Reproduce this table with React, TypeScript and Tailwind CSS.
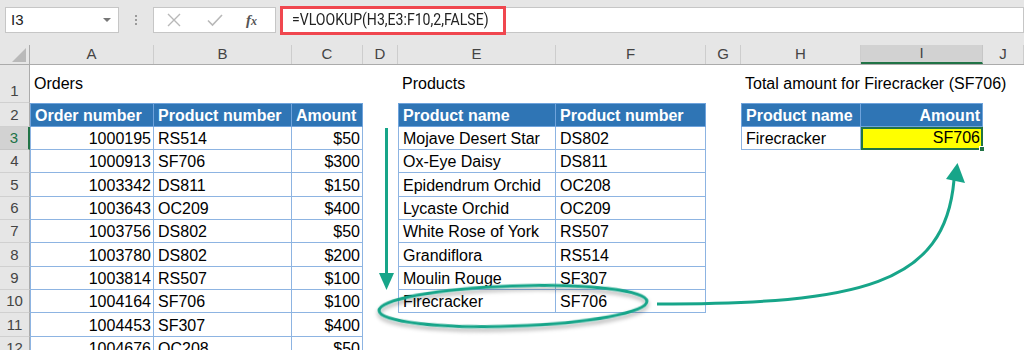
import React from "react";

const colW = [
  "w-[124px]",
  "w-[138px]",
  "w-[71px]",
  "w-[35px]",
  "w-[158px]",
  "w-[150px]",
  "w-[35px]",
  "w-[120px]",
  "w-[122px]",
  "w-[41px]",
];
const colLetters = ["A", "B", "C", "D", "E", "F", "G", "H", "I", "J"];
const rowH = [
  "h-[38px]",
  "h-[24px]",
  "h-[23px]",
  "h-[23px]",
  "h-[24px]",
  "h-[23px]",
  "h-[23px]",
  "h-[24px]",
  "h-[23px]",
  "h-[23px]",
  "h-[24px]",
  "h-[23px]",
];

const orders: [string, string, string][] = [
  ["1000195", "RS514", "$50"],
  ["1000913", "SF706", "$300"],
  ["1003342", "DS811", "$150"],
  ["1003643", "OC209", "$400"],
  ["1003756", "DS802", "$50"],
  ["1003780", "DS802", "$200"],
  ["1003814", "RS507", "$100"],
  ["1004164", "SF706", "$100"],
  ["1004453", "SF307", "$400"],
  ["1004676", "OC208", "$50"],
];
const products: [string, string][] = [
  ["Mojave Desert Star", "DS802"],
  ["Ox-Eye Daisy", "DS811"],
  ["Epidendrum Orchid", "OC208"],
  ["Lycaste Orchid", "OC209"],
  ["White Rose of York", "RS507"],
  ["Grandiflora", "RS514"],
  ["Moulin Rouge", "SF307"],
  ["Firecracker", "SF706"],
];

const HEAD =
  "bg-[#2f75b5] text-white font-bold border-r border-b border-[#6fa3dc]";
const BODY = "border-r border-b border-[#8db4e2]";
const L = "justify-start pl-[4px]";
const R = "justify-end pr-[2px]";

type Spec = { t?: React.ReactNode; cls: string };

function spec(r: number, c: number): Spec {
  if (r === 1) {
    if (c === 0) return { t: "Orders", cls: L };
    if (c === 4) return { t: "Products", cls: L };
    if (c === 7)
      return { t: "Total amount for Firecracker (SF706)", cls: L };
    return { cls: "" };
  }
  if (r === 2) {
    if (c === 0) return { t: "Order number", cls: `${HEAD} border-t border-l ${L}` };
    if (c === 1) return { t: "Product number", cls: `${HEAD} border-t ${L}` };
    if (c === 2) return { t: "Amount", cls: `${HEAD} border-t ${L}` };
    if (c === 4) return { t: "Product name", cls: `${HEAD} border-t border-l ${L}` };
    if (c === 5) return { t: "Product number", cls: `${HEAD} border-t ${L}` };
    if (c === 7) return { t: "Product name", cls: `${HEAD} border-t border-l ${L}` };
    if (c === 8) return { t: "Amount", cls: `${HEAD} border-t ${R}` };
    return { cls: "" };
  }
  const o = orders[r - 3];
  if (o) {
    if (c === 0) return { t: o[0], cls: `${BODY} border-l ${R}` };
    if (c === 1) return { t: o[1], cls: `${BODY} ${L}` };
    if (c === 2) return { t: o[2], cls: `${BODY} ${R}` };
  }
  const p = products[r - 3];
  if (p) {
    if (c === 4) return { t: p[0], cls: `${BODY} border-l ${L}` };
    if (c === 5) return { t: p[1], cls: `${BODY} ${L}` };
  }
  if (r === 3) {
    if (c === 7) return { t: "Firecracker", cls: `${BODY} border-l ${L}` };
    if (c === 8)
      return {
        t: (
          <>
            SF706
            <span className="absolute right-[-4px] bottom-[-4px] w-[6px] h-[6px] bg-[#217346] border border-white" />
          </>
        ),
        cls: "relative bg-[#ffff00] border-2 border-[#217346] justify-end pr-[1px]",
      };
  }
  return { cls: "" };
}

function FormulaBar() {
  return (
    <div className="h-[45px] bg-[#e6e6e6] flex items-start pt-[7px]">
      <div className="ml-[5px] w-[114px] h-[26px] bg-white border border-[#c6c6c6] flex items-center justify-between pl-[5px] pr-[7px] text-[15px] text-[#222]">
        <span>I3</span>
        <svg width="8" height="5" viewBox="0 0 8 5">
          <path d="M0 0 L8 0 L4 4 Z" fill="#777" />
        </svg>
      </div>
      <div className="w-[34px] h-[26px] flex flex-col items-center justify-center gap-[2px]">
        <span className="w-[2px] h-[2px] bg-[#9a9a9a]" />
        <span className="w-[2px] h-[2px] bg-[#9a9a9a]" />
        <span className="w-[2px] h-[2px] bg-[#9a9a9a]" />
      </div>
      <div className="w-[123px] h-[26px] bg-white border border-[#c6c6c6] flex items-center">
        <svg className="ml-[13px]" width="14" height="14" viewBox="0 0 14 14">
          <path d="M1 1 L13 13 M13 1 L1 13" stroke="#b8b8b8" strokeWidth="1.4" />
        </svg>
        <svg className="ml-[26px]" width="16" height="14" viewBox="0 0 16 14">
          <path d="M1 7.5 L5.5 12 L15 2" stroke="#b8b8b8" strokeWidth="1.6" fill="none" />
        </svg>
        <span className="ml-[23px] font-['Liberation_Serif',serif] italic font-bold text-[15px] text-[#555] leading-none">
          f<span className="text-[12px]">x</span>
        </span>
      </div>
      <div className="ml-[4px] flex-1 h-[26px] bg-white border border-[#c6c6c6] flex items-center">
        <div className="-ml-[1px] w-[226px] h-[29px] border-[3px] border-[#f0474f] flex items-center pl-[9px] text-[16px] text-[#222] font-['Roboto',sans-serif] whitespace-nowrap">
          <span className="inline-block origin-left scale-x-[0.88]">
            =VLOOKUP(H3,E3:F10,2,FALSE)
          </span>
        </div>
      </div>
    </div>
  );
}

function ColumnHeader() {
  return (
    <div className="h-[20px] flex bg-[#e6e6e6] border-b border-[#ababab] text-[15px] text-[#444]">
      <div className="w-[30px] shrink-0 border-r border-[#ababab] flex items-end justify-end pr-[3px] pb-[2px]">
        <svg width="14" height="14" viewBox="0 0 14 14">
          <path d="M14 0 L14 14 L0 14 Z" fill="#b9b9b9" />
        </svg>
      </div>
      {colLetters.map((l, i) => (
        <div
          key={l}
          className={`${colW[i]} shrink-0 flex items-center justify-center ${
            i === 8
              ? "bg-[#d2d2d2] border-b-2 border-b-[#217346] border-r border-r-[#c6c6c6]"
              : "border-r border-[#cdcdcd]"
          }`}
        >
          {l}
        </div>
      ))}
    </div>
  );
}

function Arrows() {
  return (
    <svg
      className="absolute left-0 top-0 pointer-events-none"
      width="1024"
      height="350"
      viewBox="0 0 1024 350"
    >
      <defs>
        <filter id="sh" x="-10%" y="-50%" width="120%" height="200%">
          <feDropShadow dx="0" dy="3" stdDeviation="2" floodColor="#000" floodOpacity="0.35" />
        </filter>
      </defs>
      <line x1="386.5" y1="128" x2="386.5" y2="276" stroke="#17a589" strokeWidth="3" />
      <path d="M379 273 L394 273 L386.5 290 Z" fill="#17a589" />
      <ellipse
        cx="513"
        cy="306"
        rx="134"
        ry="20"
        transform="rotate(-2 513 306)"
        fill="none"
        stroke="#17a589"
        strokeWidth="3"
        filter="url(#sh)"
      />
      <path
        d="M657 304 C 860 304 945 285 954 180"
        fill="none"
        stroke="#17a589"
        strokeWidth="3"
      />
      <path d="M957.5 163 L965 183 L946 179 Z" fill="#17a589" />
    </svg>
  );
}

export default function App() {
  const rows = Array.from({ length: 12 }, (_, i) => i + 1);
  return (
    <div className="relative w-[1024px] h-[350px] overflow-hidden bg-white font-['Liberation_Sans',Arial,sans-serif]">
      <FormulaBar />
      <ColumnHeader />
      <div className="flex flex-col">
        {rows.map((r, ri) => (
          <div key={r} className={`${rowH[ri]} flex shrink-0`}>
            <div
              className={`w-[30px] shrink-0 flex items-end justify-center pb-[2px] text-[15px] leading-[18px] border-b ${
                r === 3
                  ? "bg-[#d2d2d2] text-[#217346] border-r-2 border-r-[#217346] border-b-[#c6c6c6]"
                  : "bg-[#e6e6e6] text-[#444] border-r border-r-[#ababab] border-b-[#d0d0d0]"
              }`}
            >
              {r}
            </div>
            {colLetters.map((_, c) => {
              const s = spec(r, c);
              return (
                <div
                  key={c}
                  className={`${colW[c]} shrink-0 flex text-[16px] leading-[18px] whitespace-nowrap ${
                    r === 1 ? "items-center" : "items-end pb-[1px]"
                  } ${s.cls}`}
                >
                  {s.t}
                </div>
              );
            })}
          </div>
        ))}
      </div>
      <Arrows />
    </div>
  );
}
